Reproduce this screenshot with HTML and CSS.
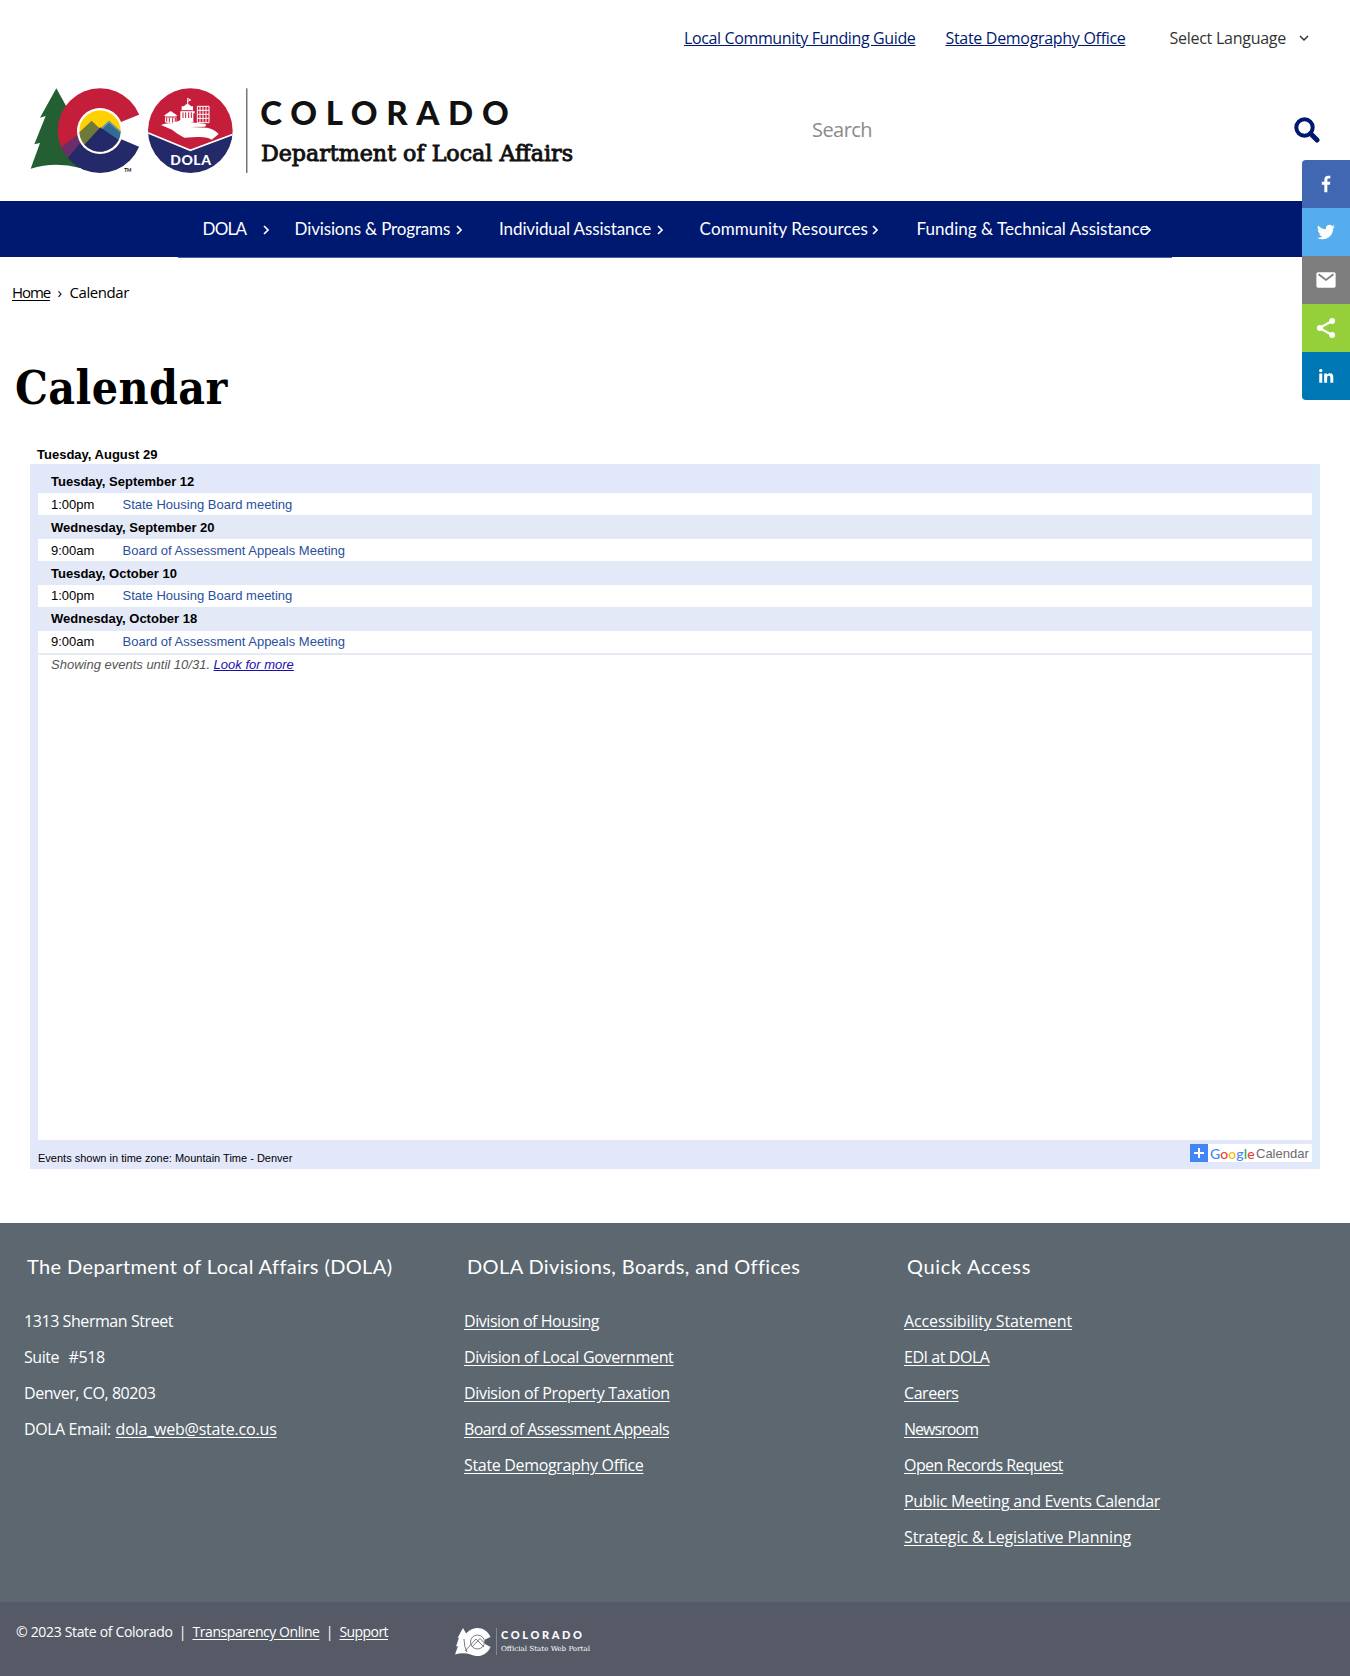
FILE: index.html
```html
<!DOCTYPE html>
<html lang="en">
<head>
<meta charset="utf-8">
<title>Calendar | Department of Local Affairs</title>
<link rel="stylesheet" href="styles.css">
</head>
<body>
<header class="header">
  <div class="topbar">
    <a class="top-link guide" href="#">Local Community Funding Guide</a>
    <a class="top-link" href="#">State Demography Office</a>
    <span class="language"><span>Select Language</span>
      <svg width="10" height="7" viewBox="0 0 10 7"><path d="M1 1l4 4 4-4" fill="none" stroke="#333" stroke-width="1.5"/></svg></span>
  </div>
  <div class="brand-row">
    <svg class="logo" width="548" height="90" viewBox="90 50 1644 270" role="img" aria-label="Colorado Department of Local Affairs">
      <defs>
        <clipPath id="disc"><circle cx="300" cy="181" r="127"/></clipPath>
        <clipPath id="seal"><circle cx="571" cy="181" r="127"/></clipPath>
      </defs>
      <path fill="#235f33" d="M169 54L120 142L137 137L103 222L120 218L92 295Q165 272 240 293L235 110L200 110Z"/>
      <g clip-path="url(#disc)">
        <path fill="#c41e3a" d="M170 50H440V124L417 133L350 160L300 181L181 240H170Z"/>
        <path fill="#24296a" d="M203 262L245 210L300 181L350 201L417 229L440 239V320H200Z"/>
        <path fill="#235f33" d="M160 240L181 228L210 262L235 300H160Z"/>
        <path fill="#24296a" d="M203 262L220 246L260 300H240Z"/>
        <path fill="#6a2e68" d="M181 234L236 190L246 212L203 264Z"/>
      </g>
      <circle cx="300" cy="182" r="69" fill="#fff"/>
      <circle cx="300" cy="182" r="62" fill="#ffd100"/>
      <path fill="#6f7a3a" d="M238 186L275 151L300 175L255 225A62 62 0 0 1 238 186Z"/>
      <path fill="#326b94" d="M300 177L327 151L362 184A62 62 0 0 1 354 213Z"/>
      <path fill="#24296a" d="M253 223L301 171L356 209A62 62 0 0 1 253 223Z"/>
      <path fill="#7794a5" d="M327 151L362 182V188L327 157L307 176L303 173Z"/>
      <text x="373" y="305" class="logo-tm">TM</text>
      <g clip-path="url(#seal)">
        <path fill="#c41e3a" d="M440 50H702V191L571 240L440 186Z"/>
        <path fill="#24296a" d="M440 186L571 240L702 191V312H440Z"/>
        <path fill="none" stroke="#fff" stroke-width="5" d="M440 186L571 240L702 191"/>
      </g>
      <path fill="#fff" d="M483 164Q500 157 516 160L540 150Q556 147 574 156L612 160Q624 163 614 169L572 170L620 172Q640 174 656 191L635 208Q620 198 590 200L553 202Q530 190 516 178Z"/>
      <path fill="#fff" d="M491 136L512 122L533 136H529V158L516 161L495 156V136ZM541 123H545V108H552Q562 94 573 108H579V123H584V129H580V155H541Z"/>
      <path fill="none" stroke="#fff" stroke-width="3" d="M563 103V84l9 5-9 4M592 108H627V157H592V108M600 108V157M609 108V157M618 108V157M592 120H627M592 132H627M592 144H627"/>
      <path stroke="#c41e3a" stroke-width="3" d="M500 142V154M508 142V156M518 142V157M526 142V154M549 126V143M557 126V143M566 126V143M574 126V143M545 121H578M495 140H530"/>
      <text x="511" y="284" textLength="122" class="logo-dola">DOLA</text>
      <path stroke="#333" stroke-width="3" d="M740.500 54V308"/>
      <text x="781" y="163" textLength="745" class="logo-name">COLORADO</text>
      <text x="783" y="271" textLength="936" lengthAdjust="spacingAndGlyphs" class="logo-dept">Department of Local Affairs</text>
    </svg>
    <form class="search"><span class="search-text">Search</span>
      <svg width="26" height="26" viewBox="0 0 26 26"><circle cx="10.500" cy="10.500" r="8.200" fill="none" stroke="#001970" stroke-width="4"/><path d="M16.500 16.500L23 23" stroke="#001970" stroke-width="5" stroke-linecap="round"/></svg>
    </form>
  </div>
</header>
<nav class="nav">
  <div class="nav-inner">
    <a class="item dola" href="#"><span>DOLA</span><svg class="chev" viewBox="0 0 6 10"><path d="M1 1l4 4-4 4"/></svg></a>
    <a class="item divisions" href="#"><span>Divisions &amp; Programs</span><svg class="chev" viewBox="0 0 6 10"><path d="M1 1l4 4-4 4"/></svg></a>
    <a class="item individual" href="#"><span>Individual Assistance</span><svg class="chev" viewBox="0 0 6 10"><path d="M1 1l4 4-4 4"/></svg></a>
    <a class="item community" href="#"><span>Community Resources</span><svg class="chev" viewBox="0 0 6 10"><path d="M1 1l4 4-4 4"/></svg></a>
    <a class="item funding" href="#"><span>Funding &amp; Technical Assistance</span><svg class="chev" viewBox="0 0 6 10"><path d="M1 1l4 4-4 4"/></svg></a>
  </div>
</nav>
<aside class="social">
  <a class="fb" href="#"><svg viewBox="0 0 32 32"><path d="M17.800 27V17h3.400l.5-4h-3.900v-2.500c0-1.100.3-1.900 2-1.900h2V5.200c-.4-.1-1.600-.2-3-.2-3 0-5 1.800-5 5.100V13h-3.400v4h3.400v10z"/></svg></a>
  <a class="tw" href="#"><svg viewBox="0 0 32 32"><path d="M28 8.600a10 10 0 0 1-2.800.8 5 5 0 0 0 2.100-2.700c-1 .5-2 1-3.100 1.200a4.900 4.900 0 0 0-8.500 3.300c0 .4 0 .8.100 1.100-4-.2-7.700-2.100-10.100-5.100a4.900 4.900 0 0 0 1.500 6.600c-.8 0-1.600-.3-2.200-.6v.1c0 2.400 1.700 4.400 3.900 4.800a5 5 0 0 1-2.200.1 5 5 0 0 0 4.600 3.400A9.900 9.900 0 0 1 4 23.600a14 14 0 0 0 7.500 2.200c9.100 0 14-7.500 14-14v-.6A10 10 0 0 0 28 8.600z"/></svg></a>
  <a class="mail" href="#"><svg viewBox="0 0 32 32"><path d="M27 22.800c0 1.100-.9 2-2 2H7a2 2 0 0 1-2-2V9.200c0-1.100.9-2 2-2h18c1.100 0 2 .9 2 2z"/><path d="M7.500 9.500L16 16l8.500-6.500" fill="none" stroke="#7d7d7d" stroke-width="2"/></svg></a>
  <a class="share" href="#"><svg viewBox="0 0 32 32"><path d="M23 8L8.500 16 23 24" fill="none" stroke="#fff" stroke-width="2.500"/><circle cx="23" cy="8" r="3.300"/><circle cx="9" cy="16" r="3.300"/><circle cx="23" cy="24" r="3.300"/></svg></a>
  <a class="in" href="#"><svg viewBox="0 0 32 32"><path d="M7 12.600h4V25H7zM9 6.500a2.300 2.300 0 1 1 0 4.600 2.300 2.300 0 0 1 0-4.600M13.500 12.600h3.800v1.700c.5-1 1.800-2 3.700-2 4 0 4.700 2.600 4.700 6V25h-3.900v-6c0-1.500 0-3.300-2-3.300s-2.300 1.600-2.300 3.200V25h-4z"/></svg></a>
</aside>
<main class="main">
  <div class="crumbs"><a href="#">Home</a><span class="sep">›</span><span class="current">Calendar</span></div>
  <h1 class="title">Calendar</h1>
  <section class="calendar">
    <div class="today">Tuesday, August 29</div>
    <div class="panel">
      <div class="agenda">
        <div class="date first">Tuesday, September 12</div>
        <div class="event"><span class="time">1:00pm</span><a>State Housing Board meeting</a></div>
        <div class="date">Wednesday, September 20</div>
        <div class="event"><span class="time">9:00am</span><a>Board of Assessment Appeals Meeting</a></div>
        <div class="date">Tuesday, October 10</div>
        <div class="event tight"><span class="time">1:00pm</span><a>State Housing Board meeting</a></div>
        <div class="date tight">Wednesday, October 18</div>
        <div class="event tight last"><span class="time">9:00am</span><a>Board of Assessment Appeals Meeting</a></div>
        <div class="more">Showing events until 10/31. <a href="#">Look for more</a></div>
      </div>
      <div class="panel-foot">
        <span>Events shown in time zone: Mountain Time - Denver</span>
        <a class="gcal"><svg width="18" height="18" viewBox="0 0 18 18"><path fill="#4285f4" d="M0 0h18v18H0z"/><path d="M9 4v10M4 9h10" stroke="#fff" stroke-width="2"/></svg><span class="google"><i class="b">G</i><i class="r">o</i><i class="y">o</i><i class="b">g</i><i class="g">l</i><i class="r">e</i></span><span class="cal">Calendar</span></a>
      </div>
    </div>
  </section>
</main>
<footer class="footer">
  <div class="col about">
    <h2>The Department of Local Affairs (DOLA)</h2>
    <p>1313 Sherman Street</p>
    <p>Suite&nbsp; #518</p>
    <p>Denver, CO, 80203</p>
    <p>DOLA Email: <a href="#">dola_web@state.co.us</a></p>
  </div>
  <div class="col divs">
    <h2>DOLA Divisions, Boards, and Offices</h2>
    <p><a href="#">Division of Housing</a></p>
    <p><a href="#">Division of Local Government</a></p>
    <p><a href="#">Division of Property Taxation</a></p>
    <p><a href="#">Board of Assessment Appeals</a></p>
    <p><a href="#">State Demography Office</a></p>
  </div>
  <div class="col quick">
    <h2>Quick Access</h2>
    <p><a href="#">Accessibility Statement</a></p>
    <p><a href="#">EDI at DOLA</a></p>
    <p><a href="#">Careers</a></p>
    <p><a href="#">Newsroom</a></p>
    <p><a href="#">Open Records Request</a></p>
    <p><a href="#">Public Meeting and Events Calendar</a></p>
    <p><a href="#">Strategic &amp; Legislative Planning</a></p>
  </div>
</footer>
<div class="legal">
  <span class="copyright">© 2023 State of Colorado</span><span class="bar">|</span><a class="transparency" href="#">Transparency Online</a><span class="bar">|</span><a class="support" href="#">Support</a>
  <svg class="portal" width="138" height="30" viewBox="0 0 138 30" role="img" aria-label="Colorado Official State Web Portal">
    <path fill="#fff" d="M8 1L2.500 11 4 10.500 1 19.500 3 19 0 27.500Q8 25 16 27.500L15 5 12 8Z"/>
    <path fill="#fff" d="M35.500 10A14 14 0 1 0 35.500 20L30 17V12.500Z"/>
    <g fill="none" stroke="#555a66" stroke-width=".8"><circle cx="22.500" cy="15" r="7"/><path d="M10 24L21 12 29 20M17 20L25 11.500 29.500 16M9 12Q9 20 12 25"/></g>
    <path stroke="#85888f" d="M41.500 1V28"/>
    <text x="46" y="12" textLength="81" class="portal-name">COLORADO</text>
    <text x="46" y="23.500" textLength="89" lengthAdjust="spacingAndGlyphs" class="portal-sub">Official State Web Portal</text>
  </svg>
</div>
</body>
</html>
```
FILE: styles.css
```css
* { box-sizing: border-box; }
body { margin: 0; background: #fff; color: #000; font: 16px/24px "Open Sans", sans-serif; }
p, h1, h2 { margin: 0; font-weight: 400; }
svg { flex: none; }

.header { height: 201px; }
.topbar { display: flex; padding: 26px 41px 0 0; justify-content: flex-end; white-space: nowrap; }
.top-link { color: #001970; margin-right: 30px; letter-spacing: -0.306px; text-underline-offset: 1px; }
.guide { letter-spacing: -0.37px; }
.top-link + .language { margin-left: 14px; }
.language { display: flex; align-items: center; gap: 13px; color: #333; letter-spacing: -0.261px; }
.brand-row { display: flex; justify-content: space-between; padding: 37px 30px 0; }
.logo { display: block; }
.logo-tm { font: 700 14px Lato, sans-serif; }
.logo-dola { font: 900 42px Lato, sans-serif; fill: #fff; }
.logo-name { font: 900 99px Lato, sans-serif; fill: #111; }
.logo-dept { font: 400 66px "DejaVu Serif Condensed", "DejaVu Serif", serif; fill: #111; stroke: #111; stroke-width: 2.5px; }
.search { display: flex; width: 508px; height: 86px; justify-content: space-between; align-items: center; color: #8b8b8b; font-size: 20px; letter-spacing: -0.557px; }

.nav { height: 56px; background: #001970; }
.nav-inner { display: flex; width: 994px; height: 57px; margin-left: 178px; padding-left: 24.5px; background: #001970; border-bottom: 1px solid #4a5fa0; }
.item { display: flex; align-items: center; color: #fff; font: 17px/56px Lato, sans-serif; text-decoration: none; white-space: nowrap; }
.chev { width: 6px; height: 10px; margin-left: 7px; margin-top: 2px; fill: none; stroke: #fff; stroke-width: 1.6; }
.dola { letter-spacing: -0.795px; }
.dola .chev { margin-left: 17px; }
.divisions { margin-left: 25.5px; letter-spacing: -0.155px; }
.divisions .chev { margin-left: 6px; }
.individual { margin-left: 37px; letter-spacing: -0.118px; }
.individual .chev { margin-left: 6px; }
.community { margin-left: 36.5px; letter-spacing: 0.114px; }
.community .chev { margin-left: 4px; }
.funding { margin-left: 38.5px; letter-spacing: 0.024px; }
.funding .chev { margin-left: -4px; }

.social { position: absolute; top: 160px; right: 0; width: 48px; border-radius: 4px 0 0 4px; overflow: hidden; }
.social a { display: flex; height: 48px; align-items: center; justify-content: center; }
.social svg { width: 28px; height: 28px; fill: #fff; }
.social .fb svg, .social .in svg, .social .tw svg { width: 24px; height: 24px; }
.fb { background: #4267b2; }
.tw { background: #55acee; }
.mail { background: #7d7d7d; }
.share { background: #95d03a; }
.in { background: #0077b5; }

.main { height: 966px; padding-top: 23px; }
.crumbs { display: flex; padding-left: 12px; font-size: 15px; }
.crumbs a { color: #000; letter-spacing: -1.102px; text-underline-offset: 2px; }
.current { letter-spacing: -0.418px; }
.sep { width: 19.5px; text-align: center; }
.title { height: 60px; margin-top: 54px; padding-left: 15px; font: 700 46px/60px "DejaVu Serif Condensed", "DejaVu Serif", serif; letter-spacing: 0.4px; }

.calendar { margin: 26px 30px 0; font: 13px/23px "Liberation Sans", Arial, sans-serif; }
.today { height: 20px; padding-left: 7px; line-height: 22px; font-weight: 700; }
.panel { height: 705px; padding: 0 8px; background: linear-gradient(to right, #e3e7fa 99%, #deebfb 99.4%); }
.agenda { height: 676px; background: #fff; }
.date { height: 24px; line-height: 25px; padding-left: 13px; background: #e4e9f8; font-weight: 700; }
.date.first { height: 29px; line-height: 35px; background: #e3e7fa; }
.date.tight { line-height: 23px; }
.event { display: flex; height: 22px; line-height: 23px; padding-left: 13px; }
.event.tight { line-height: 21px; }
.event.last { height: 24px; border-bottom: 2px solid #e4ebf2; }
.time { width: 71.5px; }
.event a { color: #2a4f9e; }
.more { padding-left: 13px; line-height: 20px; font-style: italic; color: #555; }
.more a { color: #1a0dab; }
.panel-foot { display: flex; justify-content: space-between; align-items: flex-start; height: 29px; padding-top: 4px; font-size: 11px; line-height: 29px; }
.gcal { display: flex; width: 122px; height: 18px; background: #fff; line-height: 19px; font-size: 13px; }
.google { width: 46px; margin-left: 2px; font: 500 14px/20px Lato, sans-serif; letter-spacing: 0.1px; }
.google i { font-style: normal; }
.b { color: #4285f4; }
.r { color: #ea4335; }
.y { color: #fbbc05; }
.g { color: #34a853; }
.cal { color: #6b6b6b; }

.footer { display: grid; grid-template-columns: 440px 440px 1fr; height: 379px; padding: 28px 0 0 24px; background: #5c6770; color: #fff; line-height: 36px; white-space: nowrap; }
.footer h2 { height: 52px; padding-left: 3px; font: 20px/30px Lato, sans-serif; letter-spacing: 0.38px; }
.footer .quick h2 { letter-spacing: 0.677px; }
.footer a, .legal a { color: #fff; text-underline-offset: 2px; }
.about p { letter-spacing: -0.43px; }
.about p:nth-child(3) { word-spacing: 1px; }
.about p a { margin-left: 1px; letter-spacing: -0.195px; }
.divs p { letter-spacing: -0.33px; }
.divs p:nth-child(2) { letter-spacing: -0.447px; }
.divs p:nth-child(5) { letter-spacing: -0.586px; }
.quick p { letter-spacing: -0.125px; }
.quick p:nth-child(3), .quick p:nth-child(4) { letter-spacing: -0.447px; }
.quick p:nth-child(5) { letter-spacing: -0.957px; }
.quick p:nth-child(6) { letter-spacing: -0.561px; }
.quick p:nth-child(7) { letter-spacing: -0.315px; }

.legal { display: flex; height: 74px; padding: 18px 0 0 16px; background: #555a66; color: #fff; font-size: 14px; line-height: 24px; white-space: nowrap; }
.copyright { letter-spacing: -0.327px; }
.transparency { letter-spacing: -0.439px; }
.support { letter-spacing: -0.576px; }
.bar { width: 20px; text-align: center; }
.portal { margin: 7px 0 0 67px; }
.portal-name { font: 900 11px Lato, sans-serif; fill: #fff; }
.portal-sub { font: 400 7px "DejaVu Serif Condensed", "DejaVu Serif", serif; fill: #fff; }
```
